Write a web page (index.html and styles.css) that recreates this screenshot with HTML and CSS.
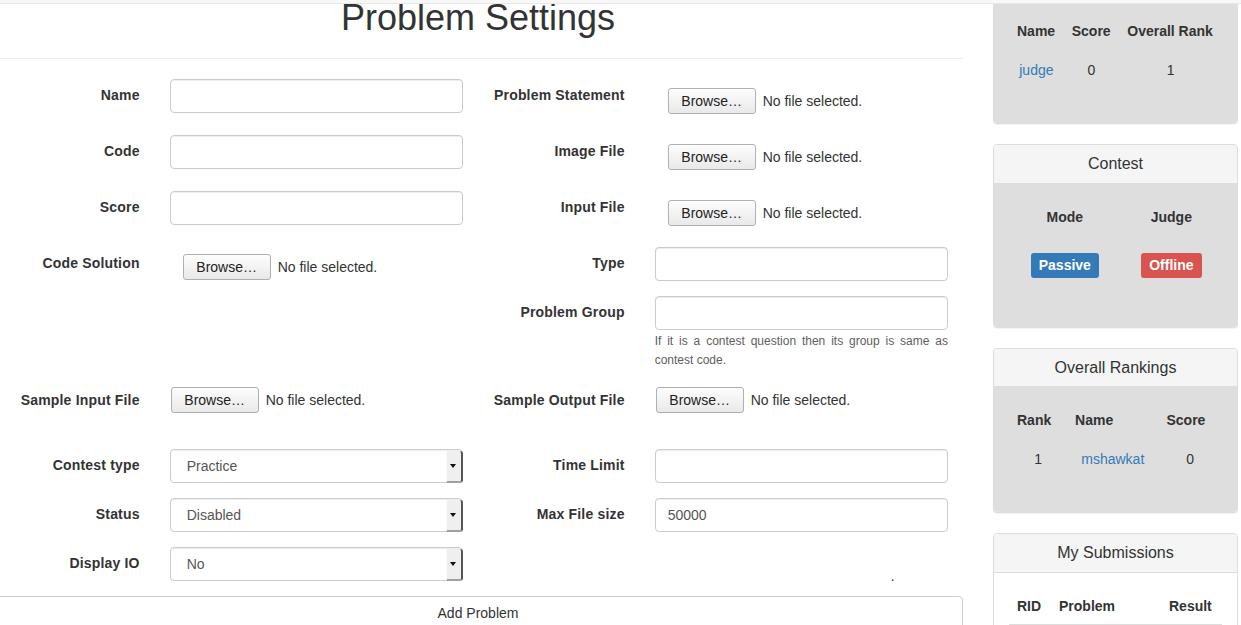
FILE: index.html
```html
<!DOCTYPE html>
<html>
<head>
<meta charset="utf-8">
<title>Problem Settings</title>
<link rel="stylesheet" href="styles.css">
</head>
<body>
<div class="navbar"></div>
<div class="page">
  <main class="main">
    <div class="page-header"><h1>Problem Settings</h1></div>
    <form class="form">
      <div class="frow">
        <div class="half"><label class="lbl">Name</label><div class="ctl"><input class="form-control" type="text"></div></div>
        <div class="half"><label class="lbl">Problem Statement</label><div class="ctl"><div class="file"><span class="browse">Browse…</span><span class="nofile">No file selected.</span></div></div></div>
      </div>
      <div class="frow">
        <div class="half"><label class="lbl">Code</label><div class="ctl"><input class="form-control" type="text"></div></div>
        <div class="half"><label class="lbl">Image File</label><div class="ctl"><div class="file"><span class="browse">Browse…</span><span class="nofile">No file selected.</span></div></div></div>
      </div>
      <div class="frow">
        <div class="half"><label class="lbl">Score</label><div class="ctl"><input class="form-control" type="text"></div></div>
        <div class="half"><label class="lbl">Input File</label><div class="ctl"><div class="file"><span class="browse">Browse…</span><span class="nofile">No file selected.</span></div></div></div>
      </div>
      <div class="frow gap15">
        <div class="half"><label class="lbl">Code Solution</label><div class="ctl"><div class="file file-cs"><span class="browse">Browse…</span><span class="nofile">No file selected.</span></div></div></div>
        <div class="half"><label class="lbl">Type</label><div class="ctl"><input class="form-control" type="text"></div></div>
      </div>
      <div class="frow tall gap14">
        <div class="half"></div>
        <div class="half"><label class="lbl">Problem Group</label><div class="ctl"><input class="form-control" type="text"><p class="help">If it is a contest question then its group is same as contest code.</p></div></div>
      </div>
      <div class="frow gap31">
        <div class="half"><label class="lbl">Sample Input File</label><div class="ctl"><div class="file file-sample"><span class="browse">Browse…</span><span class="nofile">No file selected.</span></div></div></div>
        <div class="half"><label class="lbl">Sample Output File</label><div class="ctl"><div class="file file-sample"><span class="browse">Browse…</span><span class="nofile">No file selected.</span></div></div></div>
      </div>
      <div class="frow gap15">
        <div class="half"><label class="lbl">Contest type</label><div class="ctl"><div class="sel"><select><option>Practice</option></select></div></div></div>
        <div class="half"><label class="lbl">Time Limit</label><div class="ctl"><input class="form-control" type="text"></div></div>
      </div>
      <div class="frow gap15">
        <div class="half"><label class="lbl">Status</label><div class="ctl"><div class="sel"><select><option>Disabled</option></select></div></div></div>
        <div class="half"><label class="lbl">Max File size</label><div class="ctl"><input class="form-control" type="text" value="50000"></div></div>
      </div>
      <div class="frow gap15">
        <div class="half"><label class="lbl">Display IO</label><div class="ctl"><div class="sel"><select><option>No</option></select></div></div></div>
        <div class="half"><div class="lbl"></div><div class="ctl"><div class="dot">.</div></div></div>
      </div>
      <button class="btn-block" type="button">Add Problem</button>
    </form>
  </main>
  <aside class="sidebar">
    <div class="panel">
      <div class="panel-body">
        <table class="tbl">
          <thead><tr><th>Name</th><th>Score</th><th>Overall Rank</th></tr></thead>
          <tbody><tr><td><a href="#">judge</a></td><td>0</td><td>1</td></tr></tbody>
        </table>
      </div>
    </div>
    <div class="panel">
      <div class="panel-heading">Contest</div>
      <div class="panel-body">
        <table class="tbl tbl-center">
          <thead><tr><th>Mode</th><th>Judge</th></tr></thead>
          <tbody><tr><td><div class="lblwrap"><span class="badge badge-blue">Passive</span></div></td><td><div class="lblwrap"><span class="badge badge-red">Offline</span></div></td></tr></tbody>
        </table>
      </div>
    </div>
    <div class="panel">
      <div class="panel-heading">Overall Rankings</div>
      <div class="panel-body">
        <table class="tbl">
          <thead><tr><th>Rank</th><th>Name</th><th>Score</th></tr></thead>
          <tbody><tr><td>1</td><td><a href="#">mshawkat</a></td><td>0</td></tr></tbody>
        </table>
      </div>
    </div>
    <div class="panel">
      <div class="panel-heading">My Submissions</div>
      <div class="panel-body white">
        <table class="tbl">
          <thead><tr><th class="w-rid">RID</th><th class="w-prob">Problem</th><th>Result</th></tr></thead>
          <tbody></tbody>
        </table>
      </div>
    </div>
  </aside>
</div>
</body>
</html>
```

FILE: styles.css
```css
* { box-sizing: border-box; }
html, body { margin: 0; padding: 0; background: #fff; }
body {
  font-family: "Liberation Sans", Arial, Helvetica, sans-serif;
  font-size: 14px;
  line-height: 20px;
  color: #333;
  overflow: hidden;
}
.navbar {
  position: fixed;
  top: 0; left: 0; right: 0;
  height: 4px;
  background: #f8f8f8;
  border-bottom: 1px solid #e7e7e7;
  z-index: 10;
}
.page {
  display: flex;
  align-items: flex-start;
}
.main {
  width: 970px;
  margin-left: -7px;
  margin-top: -2px;
  flex: none;
}
.page-header {
  padding-bottom: 20px;
  border-bottom: 1px solid #eee;
  margin-bottom: 20px;
}
.page-header h1 {
  margin: 0;
  font-size: 36px;
  line-height: 40px;
  font-weight: normal;
  text-align: center;
  color: #333;
}
.frow {
  display: flex;
  height: 34px;
  margin-bottom: 22px;
}
.frow.tall { height: auto; }
.frow.gap15 { margin-bottom: 15px; }
.frow.gap14 { margin-bottom: 14px; }
.frow.gap31 { margin-bottom: 31px; }
.half {
  width: 485px;
  display: flex;
  flex: none;
}
.lbl {
  width: 161.67px;
  flex: none;
  padding: 6px 15px 0;
  text-align: right;
  font-weight: bold;
  line-height: 20px;
  letter-spacing: 0.18px;
}
.ctl {
  flex: 1;
  padding: 0 15px;
  min-width: 0;
}
.form-control {
  display: block;
  width: 100%;
  height: 34px;
  padding: 6px 12px;
  font-family: inherit;
  font-size: 14px;
  color: #555;
  background: #fff;
  border: 1px solid #ccc;
  border-radius: 4px;
  box-shadow: inset 0 1px 1px rgba(0,0,0,.075);
}
.help {
  margin: 2px 0 0;
  font-size: 12px;
  line-height: 19px;
  color: #5e5e5e;
  text-align: justify;
}
.file {
  display: flex;
  align-items: center;
  padding-top: 9px;
  margin-left: 13px;
}
.file.file-cs { padding-top: 7px; }
.file.file-sample { padding-top: 3px; margin-left: 1px; }
.browse {
  display: inline-block;
  width: 88px;
  height: 26px;
  line-height: 24px;
  text-align: center;
  font-size: 14px;
  color: #222;
  border: 1px solid #b0b0b0;
  border-radius: 3px;
  background: linear-gradient(#fdfdfd, #e9e9e9);
}
.nofile {
  margin-left: 7px;
  color: #333;
}
.sel {
  position: relative;
  height: 34px;
}
.sel select {
  -webkit-appearance: none;
  -moz-appearance: none;
  appearance: none;
  display: block;
  width: 100%;
  height: 34px;
  padding: 0 16px;
  font-family: inherit;
  font-size: 14px;
  color: #555;
  background: #fff;
  border: 1px solid #ccc;
  border-radius: 4px;
  box-shadow: inset 0 1px 1px rgba(0,0,0,.075);
}
.sel::after {
  content: "";
  position: absolute;
  top: 2px;
  right: 0;
  bottom: 0;
  width: 14px;
  background: #efefef;
  border-left: 1px solid #fafafa;
  border-right: 2px solid #555;
  border-bottom: 2px solid #a0a0a0;
  border-radius: 0 3px 3px 0;
  pointer-events: none;
}
.sel::before {
  content: "";
  position: absolute;
  top: 15px;
  right: 7px;
  width: 0;
  height: 0;
  border-top: 4px solid #111;
  border-left: 3px solid transparent;
  border-right: 3px solid transparent;
  z-index: 1;
  pointer-events: none;
}
.dot {
  padding-top: 22px;
  padding-left: 236px;
  line-height: 14px;
  font-size: 14px;
  color: #333;
}
.btn-block {
  display: block;
  width: 100%;
  height: 34px;
  padding: 6px 12px;
  font-family: inherit;
  font-size: 14px;
  line-height: 20px;
  color: #333;
  background: #fff;
  border: 1px solid #ccc;
  border-radius: 4px;
}
.sidebar {
  width: 245px;
  flex: none;
  margin-left: 30px;
  margin-top: -3px;
}
.panel {
  border: 1px solid #ddd;
  border-radius: 4px;
  margin-bottom: 20px;
  background: #fff;
  box-shadow: 0 1px 1px rgba(0,0,0,.05);
  overflow: hidden;
}
.panel-heading {
  background: #f5f5f5;
  border-bottom: 1px solid #ddd;
  padding: 10px 15px;
  font-size: 16px;
  line-height: 17.6px;
  text-align: center;
  color: #333;
}
.panel-body {
  background: #dedede;
  padding: 15px;
}
.panel-body.white { background: #fff; }
.tbl {
  width: 100%;
  border-collapse: collapse;
  margin-bottom: 20px;
}
.tbl th {
  padding: 8px;
  text-align: left;
  font-weight: bold;
  line-height: 20px;
  border-bottom: 2px solid #ddd;
}
.tbl td {
  padding: 9px 8px 8px;
  text-align: center;
  line-height: 20px;
  border-top: 1px solid #d9d9d9;
}
.tbl-center th { text-align: center; }
.tbl th.w-rid { width: 42px; }
.tbl th.w-prob { width: 110px; }
.tbl a {
  color: #337ab7;
  text-decoration: none;
}
.lblwrap {
  padding: 7px 0 6px;
  line-height: 25px;
  height: 38px;
}
.badge {
  display: inline-block;
  height: 25px;
  padding: 0 8px;
  line-height: 25px;
  font-size: 14px;
  font-weight: bold;
  color: #fff;
  border-radius: 3px;
  vertical-align: top;
}
.badge-blue { background: #337ab7; }
.badge-red { background: #d9534f; }
```
